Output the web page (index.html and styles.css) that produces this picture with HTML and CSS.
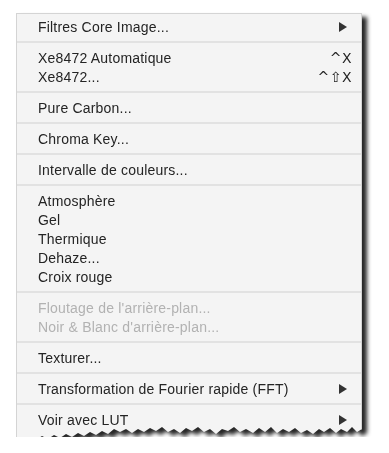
FILE: index.html
```html
<!DOCTYPE html>
<html lang="fr">
<head>
  <meta charset="UTF-8" />
  <title>Menu Filtres</title>
  <link rel="stylesheet" href="styles.css">
</head>
<body>
  <div class="shadow">
    <div class="menu">
      <div class="item">Filtres Core Image... <span class="arrow"></span></div>
      <div class="sep"></div>
      <div class="item">Xe8472 Automatique <span class="key">^X</span></div>
      <div class="item">Xe8472... <span class="key">^⇧X</span></div>
      <div class="sep"></div>
      <div class="item">Pure Carbon...</div>
      <div class="sep"></div>
      <div class="item">Chroma Key...</div>
      <div class="sep"></div>
      <div class="item">Intervalle de couleurs...</div>
      <div class="sep"></div>
      <div class="item">Atmosphère</div>
      <div class="item">Gel</div>
      <div class="item">Thermique</div>
      <div class="item">Dehaze...</div>
      <div class="item">Croix rouge</div>
      <div class="sep"></div>
      <div class="item disabled">Floutage de l'arrière-plan...</div>
      <div class="item disabled">Noir &amp; Blanc d'arrière-plan...</div>
      <div class="sep"></div>
      <div class="item">Texturer...</div>
      <div class="sep"></div>
      <div class="item">Transformation de Fourier rapide (FFT) <span class="arrow"></span></div>
      <div class="sep"></div>
      <div class="item">Voir avec LUT <span class="arrow"></span></div>
    </div>
  </div>
</body>
</html>
```

FILE: styles.css
```css
body {
  margin: 0;
  background: #fff;
  font-family: 'Liberation Sans', Arial, sans-serif;
}
.shadow {
  width: 346px;
  margin: 13px 0 0 16px;
  filter: drop-shadow(5px 4px 2px rgba(0,0,0,0.85));
}
.menu {
  height: 424px;
  box-sizing: border-box;
  padding-top: 3px;
  background: #f4f4f4;
  border: 1px solid #d4d4d4;
  border-bottom: none;
  clip-path: polygon(0 0, 346px 0, 346px 416px, 341px 419px, 336px 414px, 331px 419px, 325px 416px, 320px 420px, 314px 415px, 308px 419px, 303px 416px, 297px 421px, 291px 417px, 285px 420px, 279px 415px, 273px 419px, 267px 416px, 261px 420px, 255px 414px, 249px 419px, 243px 415px, 237px 420px, 230px 416px, 224px 419px, 218px 414px, 212px 418px, 206px 416px, 200px 421px, 194px 416px, 188px 419px, 182px 414px, 176px 418px, 170px 415px, 164px 420px, 158px 416px, 152px 419px, 146px 414px, 140px 418px, 134px 415px, 128px 419px, 122px 416px, 116px 420px, 110px 416px, 104px 419px, 98px 416px, 92px 421px, 86px 418px, 80px 422px, 74px 419px, 68px 423px, 62px 420px, 56px 424px, 50px 421px, 44px 425px, 38px 422px, 32px 426px, 26px 423px, 20px 427px, 14px 424px, 8px 428px, 0 425px);
}
.item {
  height: 19px;
  padding: 0 9px 0 21px;
  display: flex;
  align-items: center;
  justify-content: space-between;
  font-size: 14px;
  letter-spacing: 0.2px;
  color: #242424;
  white-space: nowrap;
}
.item.disabled {
  color: #b2b2b2;
}
.sep {
  height: 2px;
  margin: 5px 0;
  background: #e2e2e2;
}
.key {
  font-family: 'DejaVu Sans', 'Liberation Sans', sans-serif;
  font-size: 14px;
  letter-spacing: 0.5px;
}
.arrow {
  width: 0;
  height: 0;
  margin-right: 5px;
  border-top: 5px solid transparent;
  border-bottom: 5px solid transparent;
  border-left: 8px solid #333;
}
```
